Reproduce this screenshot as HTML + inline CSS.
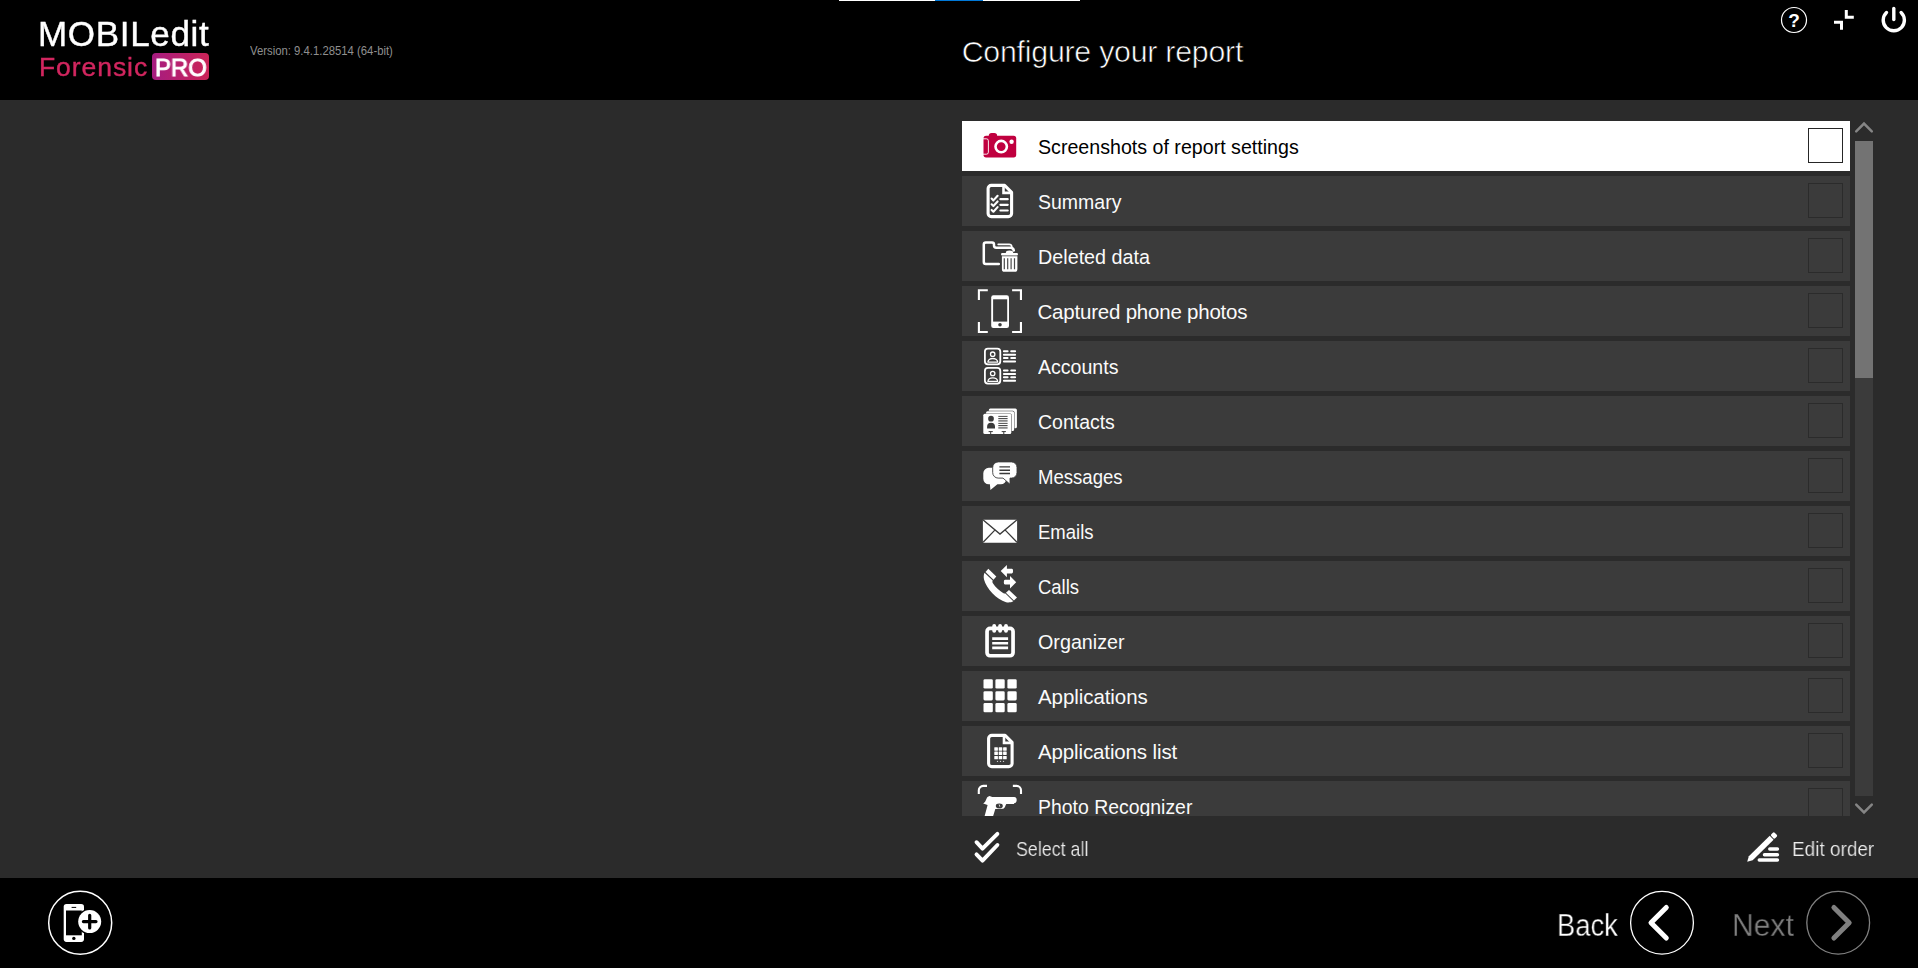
<!DOCTYPE html>
<html lang="en"><head><meta charset="utf-8"><title>MOBILedit Forensic PRO - Configure your report</title>
<style>
html,body{margin:0;padding:0;background:#2b2b2b;overflow:hidden}
body{width:1918px;height:968px;position:relative;font-family:"Liberation Sans",sans-serif;color:#fff}
.abs{position:absolute}
.t{position:absolute;white-space:nowrap;line-height:1;transform-origin:0 0}
#hdr{left:0;top:0;width:1918px;height:100px;background:#000}
#ftr{left:0;top:878px;width:1918px;height:90px;background:#000}
#list{left:962px;top:121px;width:888px;height:695px;overflow:hidden}
.row{position:absolute;left:0;width:888px;height:50px;background:#3b3b3b}
.row.sel{background:#fff}
.row .lbl{position:absolute;transform-origin:0 0;top:16.00px;font-size:20.5px;line-height:1;white-space:nowrap;color:#fafafa}
.row.sel .lbl{color:#000}
.row .cb{position:absolute;left:846px;top:7px;width:33px;height:33px;border:1px solid #2b2b2b}
.row.sel .cb{border-color:#262626}
.row svg{position:absolute;left:8px;top:0}
</style></head><body>

<div id="hdr" class="abs"></div>
<div class="abs" style="left:839px;top:0;width:241px;height:1px;background:#fff"></div>
<div class="abs" style="left:935px;top:0;width:48px;height:1px;background:#0078d7"></div>
<div class="t" style="left:38.27px;letter-spacing:0.677px;top:16px;font-size:35.0px;color:#fff;-webkit-text-stroke:0.4px #fff;will-change:transform">MOBILedit</div>
<div class="t" style="left:38.85px;letter-spacing:0.936px;top:54px;font-size:26.5px;color:#d2265f;-webkit-text-stroke:0.4px #d2265f;will-change:transform">Forensic</div>
<div class="abs" style="left:152px;top:53px;width:57px;height:26.7px;border-radius:4px;background:linear-gradient(90deg,#a61c80,#cb2457)"></div>
<div class="t" style="left:154.90px;transform:scaleX(0.9776);top:56px;font-size:24.5px;color:#fff;-webkit-text-stroke:1px #fff;will-change:transform">PRO</div>
<div class="t" style="left:249.90px;transform:scaleX(0.9290);top:45px;font-size:12.2px;color:#8f8f8f">Version: 9.4.1.28514 (64-bit)</div>
<div class="t" style="left:961.70px;letter-spacing:-0.231px;top:37px;font-size:30.3px;color:#fff;-webkit-text-stroke:0.65px #000">Configure your report</div>
<svg class="abs" style="left:1770px;top:0" width="148" height="44" viewBox="1770 0 148 44">
<circle cx="1794" cy="20" r="12.5" fill="none" stroke="#fff" stroke-width="1.2"/>
<text x="1794" y="27" font-family="Liberation Sans, sans-serif" font-weight="bold" font-size="19" fill="#fff" text-anchor="middle">?</text>
<path d="M1846.3 10v7.3h7.5M1834 22.3h7.5v7.5" fill="none" stroke="#fff" stroke-width="3"/>
<path d="M1886.5 12.5a10.6 10.6 0 1 0 14.6 0" fill="none" stroke="#fff" stroke-width="3.4" stroke-linecap="round"/>
<path d="M1893.8 8.5v11" stroke="#fff" stroke-width="3.4" stroke-linecap="round"/>
</svg>
<div id="list" class="abs">
<div class="row sel" style="top:0px"><svg width="60" height="50" viewBox="970 121 60 50"><g fill="#c0003f"><rect x="983.5" y="135.7" width="32.7" height="21.7" rx="2.6"/><rect x="988.8" y="132.9" width="8.3" height="7" rx="2.8"/></g>
<circle cx="1001.2" cy="146.6" r="5.7" fill="none" stroke="#fff" stroke-width="2.6"/>
<circle cx="1011.6" cy="141.8" r="2.2" fill="#fff"/>
<rect x="979" y="138.8" width="9.4" height="15.4" rx="2" fill="none" stroke="#fff" stroke-width="0.9"/></svg><span class="lbl" style="left:75.75px;transform:scaleX(0.9573)">Screenshots of report settings</span><span class="cb"></span></div>
<div class="row" style="top:55px"><svg width="60" height="50" viewBox="970 176 60 50"><g transform="translate(0 0)" fill="none" stroke="#fff"><path d="M991.3 185.4H1004.6L1011.6 192.4V213.400a3.200 3.200 0 0 1-3.200 3.200H991.300a3.200 3.200 0 0 1-3.200-3.200V188.600a3.200 3.200 0 0 1 3.200-3.200z" stroke-width="3.100" stroke-linejoin="round"/>
<path d="M1003.5 185.4V192.9H1011.4" stroke-width="2.6"/></g><g fill="none" stroke="#fff" stroke-linecap="round" stroke-linejoin="round"><path d="M991.6 198.6l1.8 1.8 4.2-4.6M991.6 204.25l1.8 1.8 4.2-4.6M991.6 209.9l1.8 1.8 4.2-4.6" stroke-width="2.100"/>
<path d="M1000.4 199.2h7.3M1000.4 204.8h7.3M1000.4 210.5h7.3" stroke-width="2.2"/></g></svg><span class="lbl" style="left:75.56px;transform:scaleX(0.9516)">Summary</span><span class="cb"></span></div>
<div class="row" style="top:110px"><svg width="60" height="50" viewBox="970 231 60 50"><g fill="none" stroke="#fff" stroke-linecap="round" stroke-linejoin="round">
<path d="M998.800 263.900H985.800a2 2 0 0 1-2-2V244.4a2 2 0 0 1 2-2H992a2 2 0 0 1 2 2v1.2a2.2 2.2 0 0 0 2.2 2.2H1010.5a3.2 3.2 0 0 1 3.3 2.6" stroke-width="2.5"/>
<path d="M998.2 244.3H1009a2.6 2.6 0 0 1 2.8 2.6" stroke-width="1.7"/></g>
<path d="M1002.2 253h3.6a3.7 2.4 0 0 1 7.4 0h3.6a1.2 1.2 0 0 1 0 2.4h-14.6a1.2 1.2 0 0 1 0-2.4z" fill="#fff"/>
<path d="M1001.9 256.2h15.5v13a2.6 2.6 0 0 1-2.6 2.6h-10.3a2.6 2.6 0 0 1-2.6-2.6z" fill="#fff"/>
<path d="M1004.3 258.3v11M1007.7 258.3v11M1011.1 258.3v11M1014.5 258.3v11" stroke="#4a4a4a" stroke-width="1.2"/></svg><span class="lbl" style="left:75.57px;transform:scaleX(0.9637)">Deleted data</span><span class="cb"></span></div>
<div class="row" style="top:165px"><svg width="60" height="50" viewBox="970 286 60 50"><path d="M978.9 300.1V290.2H987.8M1012.1 290.2H1020.95V300.1M978.9 322V332H987.8M1012.1 332H1020.95V322" fill="none" stroke="#fff" stroke-width="2.1"/>
<rect x="991.2" y="295.2" width="17.8" height="32.7" rx="2.2" fill="#fff"/>
<rect x="993.1" y="299.3" width="14.1" height="22.3" fill="#3b3b3b"/>
<circle cx="1000" cy="324.7" r="1.8" fill="#3b3b3b"/></svg><span class="lbl" style="left:75.52px;letter-spacing:-0.213px">Captured phone photos</span><span class="cb"></span></div>
<div class="row" style="top:220px"><svg width="60" height="50" viewBox="970 341 60 50"><g transform="translate(0 0)" fill="none" stroke="#fff"><rect x="984.9" y="348.6" width="15.4" height="15.7" rx="3" stroke-width="1.8"/>
<circle cx="992.7" cy="354.2" r="2.2" stroke-width="1.3"/>
<path d="M987.9 362.1a4.9 3.6 0 0 1 9.8 0z" stroke-width="1.3" stroke-linejoin="round"/>
<path d="M1003.9 351.3h3.7M1011.2 351.3h3.9M1003.9 354.7h11.2M1003.9 358h3.7M1011.2 358h3.9M1003.9 361.4h11.2" stroke-width="2" stroke-linecap="round"/></g><g transform="translate(0 19.3)" fill="none" stroke="#fff"><rect x="984.9" y="348.6" width="15.4" height="15.7" rx="3" stroke-width="1.8"/>
<circle cx="992.7" cy="354.2" r="2.2" stroke-width="1.3"/>
<path d="M987.9 362.1a4.9 3.6 0 0 1 9.8 0z" stroke-width="1.3" stroke-linejoin="round"/>
<path d="M1003.9 351.3h3.7M1011.2 351.3h3.9M1003.9 354.7h11.2M1003.9 358h3.7M1011.2 358h3.9M1003.9 361.4h11.2" stroke-width="2" stroke-linecap="round"/></g></svg><span class="lbl" style="left:76.20px;transform:scaleX(0.9541)">Accounts</span><span class="cb"></span></div>
<div class="row" style="top:275px"><svg width="60" height="50" viewBox="970 396 60 50"><rect x="988.8" y="408.6" width="28.1" height="19.7" rx="1.5" fill="#fff"/>
<rect x="985.6" y="410.8" width="28.9" height="20.7" rx="1.7" fill="#3b3b3b"/>
<rect x="986" y="411.2" width="28.1" height="19.9" rx="1.5" fill="#fff"/>
<rect x="982.9" y="413.4" width="28.8" height="20.9" rx="1.7" fill="#3b3b3b"/>
<rect x="983.3" y="413.8" width="28" height="20.1" rx="1.5" fill="#fff"/>
<circle cx="991" cy="418.7" r="2.85" fill="#3b3b3b"/>
<path d="M987.1 428.5v-1.8a3.95 3.95 0 0 1 7.9 0v1.8z" fill="#3b3b3b"/>
<path d="M998.3 416.4h9.3M998.3 418.5h9.3M998.3 423.4h9.3M998.3 425.5h9.3" stroke="#3b3b3b" stroke-width="0.9"/>
<path d="M998.3 420.7h9.3M998.3 427.8h9.3" stroke="#8a8a8a" stroke-width="2"/>
<path d="M988.6 431.6h4.2M990.7 431.6v2.4M1001.7 431.6h4.2M1003.8 431.6v2.4" stroke="#3b3b3b" stroke-width="1"/></svg><span class="lbl" style="left:75.77px;transform:scaleX(0.9501)">Contacts</span><span class="cb"></span></div>
<div class="row" style="top:330px"><svg width="60" height="50" viewBox="970 451 60 50"><path d="M988.8 467.8h12a5.5 5.5 0 0 1 5.5 5.5v5.5a5.5 5.5 0 0 1-5.5 5.5h-3.4l-7 5.8-.5-5.8h-1.1a5.5 5.5 0 0 1-5.5-5.5v-5.5a5.5 5.5 0 0 1 5.5-5.500z" fill="#fff"/>
<path d="M998.2 461.9h13.300a5.500 5.500 0 0 1 5.500 5.500v5.200a5.500 5.500 0 0 1-5.500 5.500h-1.500v6.200l-7-6.200h-4.800a5.500 5.500 0 0 1-5.500-5.500v-5.200a5.500 5.500 0 0 1 5.500-5.500z" fill="#fff" stroke="#3b3b3b" stroke-width="0.9"/>
<path d="M999.4 466.9h10.600M999.4 470.200h10.600M999.4 473.500h10.600" stroke="#3b3b3b" stroke-width="1.4"/></svg><span class="lbl" style="left:75.67px;transform:scaleX(0.9057)">Messages</span><span class="cb"></span></div>
<div class="row" style="top:385px"><svg width="60" height="50" viewBox="970 506 60 50"><rect x="982.9" y="519.7" width="34.2" height="23.1" rx="0.8" fill="#fff"/>
<path d="M983.2 520.1L1000 534.1L1016.8 520.1M994.6 530.4L983.100 542.300M1005.500 530.400L1017 542.200" fill="none" stroke="#3b3b3b" stroke-width="1.3"/></svg><span class="lbl" style="left:76.17px;transform:scaleX(0.9038)">Emails</span><span class="cb"></span></div>
<div class="row" style="top:440px"><svg width="60" height="50" viewBox="970 561 60 50"><path d="M988.3 568.700L996.300 576.500L993.500 579.800L985.500 572.100z" fill="#fff"/>
<path d="M1009 589.900L1017 597.400L1013.900 600.500L1005.900 592.800z" fill="#fff"/>
<path d="M984.500 572.800L992.700 580.600C992.300 581.600 992.300 582.400 992.900 583.300C995.500 587.300 999.300 590.800 1003.100 593C1004 593.500 1004.700 593.600 1005.400 593.500L1013.300 601.300C1011.500 602.500 1008.500 602.700 1006.100 602.300C996.500 599.400 986.500 588.500 984 579.500C983.500 577 983.700 574.500 984.500 572.800z" fill="#fff"/>
<path d="M1000.700 571.100L1006.900 564.900V568.700H1011.900A1.200 2.350 0 0 1 1011.900 573.400H1006.900V577.300z" fill="#fff"/>
<path d="M1016.200 582.200L1010 576V579.800H1005A1.200 2.350 0 0 0 1005 584.500H1010V588.400z" fill="#fff"/></svg><span class="lbl" style="left:75.83px;transform:scaleX(0.9015)">Calls</span><span class="cb"></span></div>
<div class="row" style="top:495px"><svg width="60" height="50" viewBox="970 616 60 50"><rect x="987.050" y="628.400" width="26" height="27.350" rx="3" fill="none" stroke="#fff" stroke-width="3.7"/>
<path d="M994.200 626v4.800M1000.100 626v4.800M1006 626v4.800" stroke="#fff" stroke-width="3.900" stroke-linecap="round"/>
<path d="M992.200 638.600h15.900M992.200 643.200h15.900M992.200 647.900h15.900" stroke="#fff" stroke-width="2.600"/></svg><span class="lbl" style="left:75.82px;transform:scaleX(0.9623)">Organizer</span><span class="cb"></span></div>
<div class="row" style="top:550px"><svg width="60" height="50" viewBox="970 671 60 50"><g fill="#fff"><rect x="983.5" y="679.3" width="9.300" height="9.200" rx="1.300"/><rect x="995.4" y="679.3" width="9.300" height="9.200" rx="1.300"/><rect x="1007.4" y="679.3" width="9.300" height="9.200" rx="1.300"/><rect x="983.5" y="691.2" width="9.300" height="9.200" rx="1.300"/><rect x="995.4" y="691.2" width="9.300" height="9.200" rx="1.300"/><rect x="1007.4" y="691.2" width="9.300" height="9.200" rx="1.300"/><rect x="983.5" y="703.1" width="9.300" height="9.200" rx="1.300"/><rect x="995.4" y="703.1" width="9.300" height="9.200" rx="1.300"/><rect x="1007.4" y="703.1" width="9.300" height="9.200" rx="1.300"/></g></svg><span class="lbl" style="left:75.98px;letter-spacing:-0.069px">Applications</span><span class="cb"></span></div>
<div class="row" style="top:605px"><svg width="60" height="50" viewBox="970 726 60 50"><g transform="translate(0.5 550)" fill="none" stroke="#fff"><path d="M991.3 185.4H1004.6L1011.6 192.4V213.400a3.200 3.200 0 0 1-3.200 3.200H991.300a3.200 3.200 0 0 1-3.200-3.200V188.600a3.200 3.200 0 0 1 3.200-3.200z" stroke-width="3.100" stroke-linejoin="round"/>
<path d="M1003.5 185.4V192.9H1011.4" stroke-width="2.6"/></g><g fill="#fff"><rect x="994.3" y="747.3" width="3.600" height="3.400" rx="0.400"/><rect x="998.7" y="747.3" width="3.600" height="3.400" rx="0.400"/><rect x="1003.1" y="747.3" width="3.600" height="3.400" rx="0.400"/><rect x="994.3" y="751.6" width="3.600" height="3.400" rx="0.400"/><rect x="998.7" y="751.6" width="3.600" height="3.400" rx="0.400"/><rect x="1003.1" y="751.6" width="3.600" height="3.400" rx="0.400"/><rect x="994.3" y="755.9" width="3.600" height="3.400" rx="0.400"/><rect x="998.7" y="755.9" width="3.600" height="3.400" rx="0.400"/><rect x="1003.1" y="755.9" width="3.600" height="3.400" rx="0.400"/></g><g fill="#ccc"><circle cx="997.5" cy="761.400" r="0.700"/><circle cx="1000.500" cy="761.400" r="0.700"/><circle cx="1003.500" cy="761.400" r="0.700"/></g></svg><span class="lbl" style="left:75.98px;letter-spacing:-0.128px">Applications list</span><span class="cb"></span></div>
<div class="row" style="top:660px"><svg width="60" height="50" viewBox="970 781 60 50"><path d="M978.800 794V790.300a4.400 4.400 0 0 1 4.400-4.400H987M1012.850 785.900H1016.600a4.400 4.400 0 0 1 4.400 4.400V794" fill="none" stroke="#fff" stroke-width="2.100"/>
<path d="M989.600 796.100L992.200 796.900H1014.200A2.500 3.100 0 0 1 1014.200 803.100L1014.200 803.900H1006.300C1005.300 805.500 1005 808.300 1003.200 808.700L995.300 809.100L993 816.500H984.500L987.600 804.900L983.200 803.600C985 802.300 985.800 800.500 986.500 798.700C987 797.500 987.800 796.500 989.600 796.100zM995.800 805.900A3.500 2.300 0 0 0 1002.800 805.900A3.500 2.300 0 0 0 995.800 805.900z" fill="#fff" fill-rule="evenodd"/>
<path d="M999.200 804.500l.6 2.200" stroke="#fff" stroke-width="0.800"/></svg><span class="lbl" style="left:76.10px;transform:scaleX(0.9474)">Photo Recognizer</span><span class="cb"></span></div>
</div>
<div class="abs" style="left:1855px;top:141px;width:18px;height:655px;background:#3b3b3b"></div>
<div class="abs" style="left:1855px;top:141px;width:18px;height:237px;background:#737373"></div>
<svg class="abs" style="left:1853px;top:119px" width="24" height="700" viewBox="1853 119 24 700">
<path d="M1856.200 131.300l7.800-7.800 7.800 7.800" fill="none" stroke="#858585" stroke-width="2.500" stroke-linecap="round"/>
<path d="M1856.200 804.700l7.800 7.800 7.800-7.800" fill="none" stroke="#858585" stroke-width="2.500" stroke-linecap="round"/>
</svg>
<svg class="abs" style="left:970px;top:826px" width="40" height="44" viewBox="970 826 40 44">
<path d="M976.500 842.200l6 6.400 14.900-14.800M976.500 854.300l6 6.300 14.900-15.600" fill="none" stroke="#fff" stroke-width="3.900" stroke-linecap="round" stroke-linejoin="round"/></svg>
<div class="t" style="left:1016.09px;transform:scaleX(0.8749);top:839px;font-size:20.4px;color:#ececec;-webkit-text-stroke:0.2px #2b2b2b;will-change:transform">Select all</div>
<svg class="abs" style="left:1740px;top:826px" width="46" height="44" viewBox="1740 826 46 44">
<g transform="translate(1747.200 861.800) rotate(-44.500)" fill="#fff"><path d="M0 0L5 -2.750H34.300V2.750H5z"/><rect x="35.200" y="-2.750" width="4.800" height="5.500" rx="1.300"/></g>
<path d="M1769.800 849.100h7.600M1764.500 854.650h12.900M1759.300 860.100h18.100" stroke="#fff" stroke-width="3.500" stroke-linecap="round"/></svg>
<div class="t" style="left:1791.93px;transform:scaleX(0.9304);top:839px;font-size:20.4px;color:#ececec;-webkit-text-stroke:0.2px #2b2b2b;will-change:transform">Edit order</div>
<div id="ftr" class="abs"></div>
<svg class="abs" style="left:40px;top:880px" width="1878" height="88" viewBox="40 880 1878 88">
<circle cx="80.200" cy="922.700" r="31.500" fill="none" stroke="#fff" stroke-width="1.500"/>
<rect x="63.700" y="903.900" width="20.300" height="38" rx="2.800" fill="#fff"/>
<rect x="66" y="910.500" width="15.800" height="24.800" fill="#000"/>
<circle cx="73.850" cy="938.400" r="1.700" fill="#000"/>
<path d="M72 907.400h3.800" stroke="#000" stroke-width="1" stroke-linecap="round"/>
<circle cx="89.700" cy="921.600" r="12.800" fill="#000"/>
<circle cx="89.700" cy="921.600" r="11.500" fill="#fff"/>
<path d="M83.400 921.600h12.600M89.700 915.300v12.600" stroke="#000" stroke-width="3.200" stroke-linecap="round"/>
<circle cx="1662" cy="922.700" r="31.400" fill="none" stroke="#fff" stroke-width="1.300"/>
<path d="M1666.300 907.400L1651 922.700L1666.300 938" fill="none" stroke="#fff" stroke-width="5" stroke-linecap="round" stroke-linejoin="round"/>
<circle cx="1838.200" cy="922.700" r="31.400" fill="none" stroke="#808080" stroke-width="1.300"/>
<path d="M1833.900 907.400L1849.200 922.700L1833.900 938" fill="none" stroke="#808080" stroke-width="5" stroke-linecap="round" stroke-linejoin="round"/>
</svg>
<div class="t" style="left:1557.13px;transform:scaleX(0.8939);top:910px;font-size:30.6px;color:#fff;-webkit-text-stroke:0.35px #000;will-change:transform">Back</div>
<div class="t" style="left:1731.80px;transform:scaleX(0.9838);top:910px;font-size:30.6px;color:#808080;-webkit-text-stroke:0.35px #000;will-change:transform">Next</div>
</body></html>
